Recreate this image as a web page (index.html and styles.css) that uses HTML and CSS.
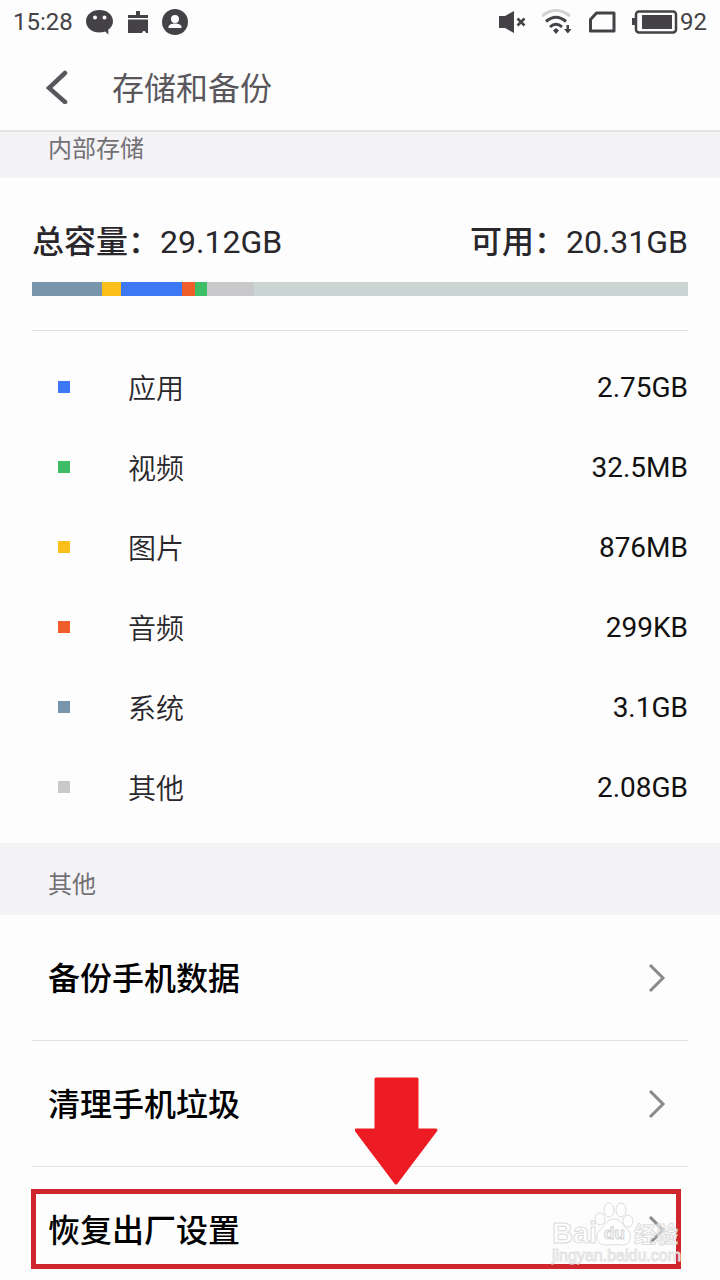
FILE: index.html
```html
<!DOCTYPE html>
<html lang="zh-CN">
<head>
<meta charset="utf-8">
<meta name="viewport" content="width=device-width, initial-scale=1">
<title>存储和备份</title>
<link rel="stylesheet" href="styles.css">
</head>
<body>
<div class="status-bar">
  <div class="status-left">
    <span class="clock">15:28</span>
    <svg width="28" height="26" viewBox="0 0 28 26" aria-hidden="true"><path fill="#444246" fill-rule="evenodd" d="M13.500 1C6 1 0 5.700 0 12.300s6 11.200 13.500 11.200c2 0 4-.3 5.500-.9L22.500 25.500l-.3-4.700C25.300 18.700 27 15.500 27 12.300 27 5.700 21 1 13.500 1zM9 6.500a2 2 0 1 1 0 4 2 2 0 0 1 0-4zm9.500 0a2 2 0 1 1 0 4 2 2 0 0 1 0-4z"/></svg>
    <svg width="22" height="24" viewBox="0 0 22 24" aria-hidden="true"><path fill="#444246" d="M9 1h4v4h8v3H1V5h8zM1 9.500h20V23h-2l-1-2h-2l-1 2H1z"/></svg>
    <svg width="26" height="26" viewBox="0 0 26 26" aria-hidden="true"><circle cx="13" cy="13" r="13" fill="#444246"/><circle cx="13" cy="10" r="4" fill="#fdfdfd"/><path fill="#fdfdfd" d="M6.500 19v-1c0-2 3-3.500 6.500-3.500s6.500 1.500 6.500 3.500v1z"/></svg>
  </div>
  <div class="status-right">
    <svg width="28" height="24" viewBox="0 0 28 24" aria-hidden="true"><path fill="#444246" d="M0 6h6l9-5v22l-9-5H0z"/><path d="M18.500 8.500l7 7m0-7l-7 7" stroke="#444246" stroke-width="2.500"/></svg>
    <svg width="32" height="26" viewBox="0 0 32 26" fill="none" aria-hidden="true"><path d="M0 7Q14 -4 28 7" stroke="#d2d1d3" stroke-width="3"/><path d="M4 12.500Q14 4 24 12.500M8 18q6-5.500 12 0" stroke="#444246" stroke-width="3"/><path fill="#444246" d="M14 19l3 2.500-3 3.500-3-3.500zM24.500 16H27v4h2.500l-3.700 4.500-3.800-4.500h2.500z"/></svg>
    <svg width="28" height="22" viewBox="0 0 28 22" fill="none" aria-hidden="true"><path d="M6.500 2H24V20H0.500V8.500z" stroke="#444246" stroke-width="3" stroke-linejoin="round" transform="translate(1 0)"/></svg>
    <span class="battery">
      <svg width="46" height="24" viewBox="0 0 46 24" aria-hidden="true"><rect x="4" y="1.500" width="40" height="21" rx="3" fill="none" stroke="#444246" stroke-width="2.500"/><path fill="#444246" d="M10 5h30v14H10zM0 8h3v7H0z"/></svg>
      <span>92</span>
    </span>
  </div>
</div>

<header class="app-bar">
  <button class="back" type="button" aria-label="返回">
    <svg width="24" height="36" viewBox="0 0 24 36" fill="none" aria-hidden="true"><path d="M19 5L3 20l16 14" stroke="#59575b" stroke-width="4.500" stroke-linecap="round"/></svg>
  </button>
  <h1 class="title">存储和备份</h1>
</header>

<main>
  <h2 class="section section-top">内部存储</h2>
  <section class="storage">
    <div class="summary">
      <span><span class="medium">总容量：</span>29.12GB</span>
      <span><span class="medium">可用：</span>20.31GB</span>
    </div>
    <div class="meter">
      <span class="system" style="width:10.700%"></span>
      <span class="image" style="width:2.900%"></span>
      <span class="app" style="width:9.300%"></span>
      <span class="audio" style="width:1.900%"></span>
      <span class="video" style="width:1.900%"></span>
      <span class="other" style="width:7.200%"></span>
    </div>
    <ul class="usage">
      <li><i class="app"></i><span class="name">应用</span><span class="size">2.75GB</span></li>
      <li><i class="video"></i><span class="name">视频</span><span class="size">32.5MB</span></li>
      <li><i class="image"></i><span class="name">图片</span><span class="size">876MB</span></li>
      <li><i class="audio"></i><span class="name">音频</span><span class="size">299KB</span></li>
      <li><i class="system"></i><span class="name">系统</span><span class="size">3.1GB</span></li>
      <li><i class="other"></i><span class="name">其他</span><span class="size">2.08GB</span></li>
    </ul>
  </section>

  <h2 class="section">其他</h2>
  <div class="actions">
    <button class="action" type="button"><span>备份手机数据</span>
      <svg width="18" height="30" viewBox="0 0 18 30" fill="none" aria-hidden="true"><path d="M2 1l13 13L2 27" stroke="#8b898c" stroke-width="3"/></svg>
    </button>
    <button class="action" type="button"><span>清理手机垃圾</span>
      <svg width="18" height="30" viewBox="0 0 18 30" fill="none" aria-hidden="true"><path d="M2 1l13 13L2 27" stroke="#8b898c" stroke-width="3"/></svg>
    </button>
    <div class="reset">
      <button class="action" type="button"><span>恢复出厂设置</span>
        <svg width="18" height="30" viewBox="0 0 18 30" fill="none" aria-hidden="true"><path d="M2 1l13 13L2 27" stroke="#8b898c" stroke-width="3"/></svg>
      </button>
      <div class="highlight"></div>
      <svg class="arrow" width="84" height="108" viewBox="0 0 84 108" aria-hidden="true"><path d="M21 2h41v51h19L41 106 1 53h20z" fill="#ed1c24" stroke="#ed1c24" stroke-width="3" stroke-linejoin="round"/></svg>
      <svg class="watermark" width="132" height="64" viewBox="0 0 132 64">
        <g fill="#fff" fill-opacity=".5" stroke="#dcdcdc" stroke-width="1">
          <text x="1" y="42" class="wm-brand">Bai</text>
          <ellipse cx="49" cy="18" rx="5" ry="6"/><ellipse cx="58" cy="9" rx="5" ry="7"/><ellipse cx="70" cy="9" rx="5" ry="7"/><ellipse cx="77" cy="20" rx="5" ry="6"/>
          <path d="M63 18c-7 0-9 7-14 11-6 6-3 15 5 15 4 0 12-1 17 0 8 1 11-9 6-15-5-4-7-11-14-11z"/>
          <text x="53" y="38" class="wm-du" stroke="#d2d2d2">du</text>
          <text x="83" y="41" class="wm-cn">经验</text>
        </g>
        <text x="1" y="60" class="wm-url" fill="#fff" fill-opacity=".6" stroke="#e2e2e2">jingyan.baidu.com</text>
      </svg>
    </div>
  </div>
</main>
</body>
</html>
```
FILE: styles.css
```css
* { box-sizing: border-box; }
body {
  margin: 0;
  background: #fdfdfd;
  color: #29272b;
  font-family: Roboto, "Noto Sans CJK SC", sans-serif;
}
svg { display: block; flex: none; }
button {
  border: 0;
  padding: 0;
  background: none;
  color: inherit;
  font: inherit;
  cursor: pointer;
}

.status-bar {
  display: flex;
  justify-content: space-between;
  align-items: center;
  height: 44px;
  padding: 0 13px;
  color: #444246;
  font-size: 24px;
}
.status-left { display: flex; align-items: center; gap: 13px; }
.status-right { display: flex; align-items: center; gap: 15px; }
.battery { display: flex; align-items: center; gap: 2px; }

.app-bar {
  display: flex;
  align-items: center;
  gap: 42px;
  height: 88px;
  padding: 0 46px 2px;
  border-bottom: 2px solid #e5e3e6;
}
.title {
  margin: 0;
  color: #59575b;
  font-size: 32px;
  font-weight: 400;
}

.section {
  margin: 0;
  padding: 24px 48px 12px;
  background: #f4f3f6;
  color: #737175;
  font-size: 24px;
  font-weight: 400;
  line-height: 36px;
}
.section-top { padding: 0 48px 12px; line-height: 34px; }

.storage { padding: 40px 32px 15px; }
.summary {
  display: flex;
  justify-content: space-between;
  font-size: 32px;
  line-height: 48px;
}
.medium { font-weight: 500; }
.meter {
  display: flex;
  height: 14px;
  margin: 16px 0 34px;
  background: #cad5d4;
}
.system { background: #7895ac; }
.image { background: #fbbf1c; }
.app { background: #3c78f4; }
.audio { background: #ef5d2a; }
.video { background: #3dbd66; }
.other { background: #c9c8ca; }

.usage {
  margin: 0;
  padding: 16px 0 1px;
  border-top: 1px solid #dedde0;
  list-style: none;
  font-size: 28px;
}
.usage li {
  display: flex;
  align-items: center;
  height: 80px;
}
.usage i {
  width: 12px;
  height: 12px;
  margin: 0 58px 0 26px;
}
.name { font-weight: 350; }
.size { margin-left: auto; color: #111; }

.actions { padding: 0 32px; }
.action {
  display: flex;
  justify-content: space-between;
  align-items: center;
  width: 100%;
  padding: 40px 22px 37px 16px;
  border-bottom: 1px solid #e3e2e5;
  color: #000;
  font-size: 32px;
  font-weight: 500;
  line-height: 48px;
}
.reset { position: relative; }
.reset .action { padding-bottom: 24px; border-bottom: 0; }
.highlight {
  position: absolute;
  top: 22px;
  left: -1px;
  right: 7px;
  height: 80px;
  border: 5px solid #d0272e;
  pointer-events: none;
}
.arrow { position: absolute; top: -90px; left: 50%; margin-left: -5px; }
.watermark { position: absolute; top: 34px; right: 5px; }
.wm-brand { font: 700 29px "Liberation Sans", sans-serif; }
.wm-du { font: 700 17px "Liberation Sans", sans-serif; }
.wm-cn { font: 700 22px "Noto Sans CJK SC", sans-serif; }
.wm-url { font: 400 16px "Liberation Sans", sans-serif; }
```
